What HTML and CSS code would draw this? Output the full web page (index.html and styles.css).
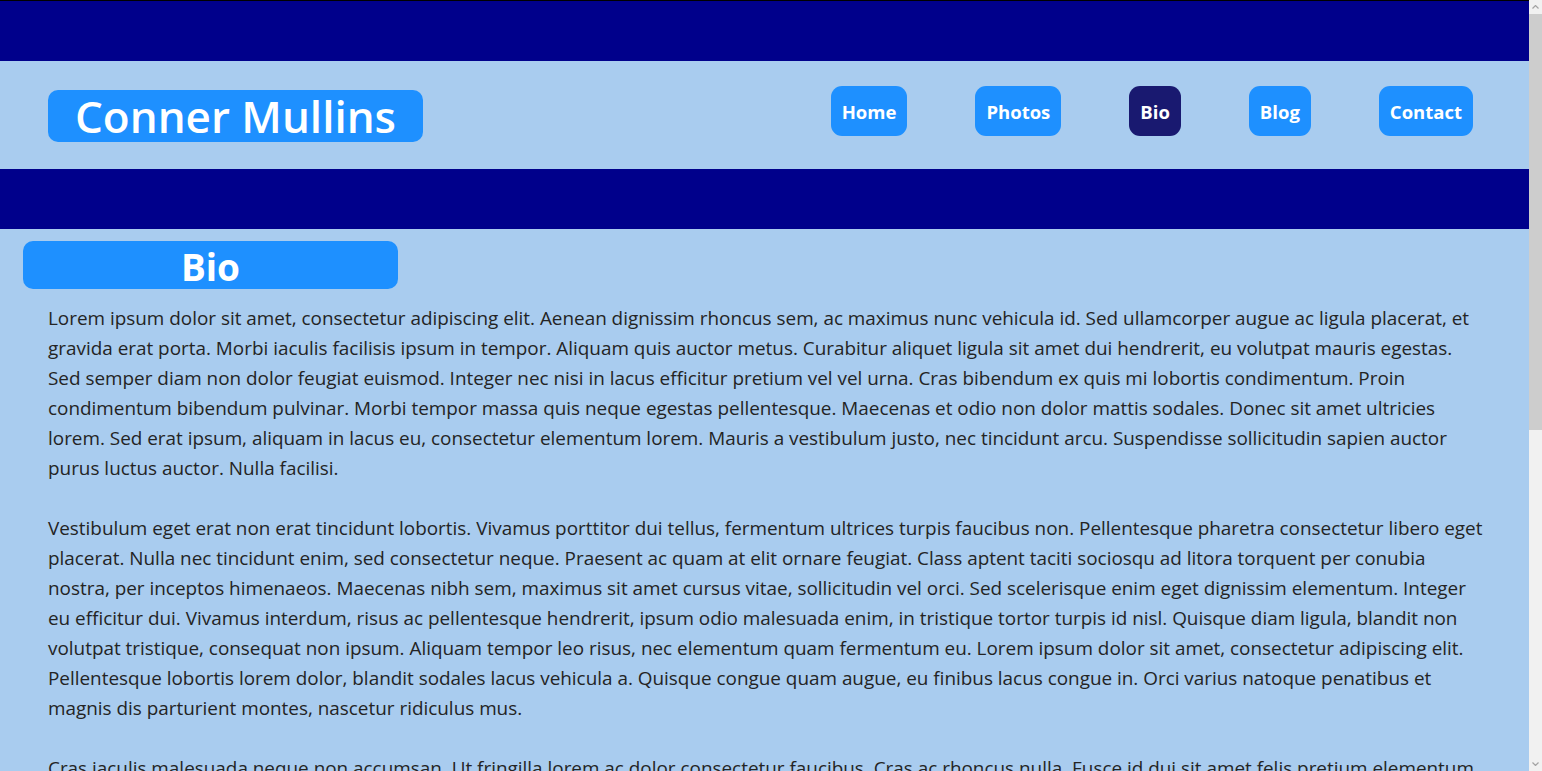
FILE: index.html
```html
<!DOCTYPE html>
<html lang="en">
<head>
<meta charset="utf-8">
<title>Conner Mullins - Bio</title>
<link rel="stylesheet" href="styles.css">
</head>
<body>
<div class="page">
  <header class="site-header">
    <h1 class="brand">Conner Mullins</h1>
    <nav class="main-nav">
      <a class="nav-link" href="#">Home</a>
      <a class="nav-link" href="#">Photos</a>
      <a class="nav-link active" href="#">Bio</a>
      <a class="nav-link" href="#">Blog</a>
      <a class="nav-link" href="#">Contact</a>
    </nav>
  </header>
  <main class="content">
    <h2 class="section-title">Bio</h2>
    <p class="text">Lorem ipsum dolor sit amet, consectetur adipiscing elit. Aenean dignissim rhoncus sem, ac maximus nunc vehicula id. Sed ullamcorper augue ac ligula placerat, et gravida erat porta. Morbi iaculis facilisis ipsum in tempor. Aliquam quis auctor metus. Curabitur aliquet ligula sit amet dui hendrerit, eu volutpat mauris egestas. Sed semper diam non dolor feugiat euismod. Integer nec nisi in lacus efficitur pretium vel vel urna. Cras bibendum ex quis mi lobortis condimentum. Proin condimentum bibendum pulvinar. Morbi tempor massa quis neque egestas pellentesque. Maecenas et odio non dolor mattis sodales. Donec sit amet ultricies lorem. Sed erat ipsum, aliquam in lacus eu, consectetur elementum lorem. Mauris a vestibulum justo, nec tincidunt arcu. Suspendisse sollicitudin sapien auctor purus luctus auctor. Nulla facilisi.</p>
    <p class="text">Vestibulum eget erat non erat tincidunt lobortis. Vivamus porttitor dui tellus, fermentum ultrices turpis faucibus non. Pellentesque pharetra consectetur libero eget placerat. Nulla nec tincidunt enim, sed consectetur neque. Praesent ac quam at elit ornare feugiat. Class aptent taciti sociosqu ad litora torquent per conubia nostra, per inceptos himenaeos. Maecenas nibh sem, maximus sit amet cursus vitae, sollicitudin vel orci. Sed scelerisque enim eget dignissim elementum. Integer eu efficitur dui. Vivamus interdum, risus ac pellentesque hendrerit, ipsum odio malesuada enim, in tristique tortor turpis id nisl. Quisque diam ligula, blandit non volutpat tristique, consequat non ipsum. Aliquam tempor leo risus, nec elementum quam fermentum eu. Lorem ipsum dolor sit amet, consectetur adipiscing elit. Pellentesque lobortis lorem dolor, blandit sodales lacus vehicula a. Quisque congue quam augue, eu finibus lacus congue in. Orci varius natoque penatibus et magnis dis parturient montes, nascetur ridiculus mus.</p>
    <p class="text">Cras iaculis malesuada neque non accumsan. Ut fringilla lorem ac dolor consectetur faucibus. Cras ac rhoncus nulla. Fusce id dui sit amet felis pretium elementum. Nam vel augue in nunc tempus vulputate. Donec porta, sapien eget facilisis tincidunt, nibh massa scelerisque lorem, in aliquam nisl nulla vel risus. Etiam eleifend, justo non posuere convallis, nunc metus ultricies enim, nec sodales ante lacus at neque. Mauris id lectus a mauris aliquam hendrerit. Phasellus semper, nisi vitae feugiat ultrices, est odio dictum augue, sit amet rutrum lorem arcu eget lectus. Nunc venenatis ipsum eu risus sagittis, a vulputate nibh tempor. Integer pulvinar nibh vel mi interdum, quis efficitur est euismod. Praesent vitae lacus non mi tempus fringilla. Duis faucibus, nulla vitae sagittis iaculis, magna urna consequat sem, id bibendum libero mi nec ipsum.</p>
    <p class="text">Aenean vel tortor vitae metus convallis placerat. Suspendisse potenti. Nulla facilisi. Curabitur ac lectus eget sem aliquet dictum sed vitae lorem. Sed ut dui et augue egestas iaculis. In hac habitasse platea dictumst. Proin at blandit justo, id malesuada lacus. Vivamus ac tristique orci. Nunc luctus viverra ex, sed consequat sapien pharetra in. Morbi posuere, nibh at tristique dignissim, mauris mi vulputate nisl, sed convallis nisi odio eu quam. Ut feugiat ante non ligula tincidunt, id finibus erat congue. Maecenas sollicitudin risus in turpis fermentum, ac tincidunt ante elementum. Donec vehicula, metus sit amet faucibus vestibulum, ante mauris pretium metus, eget bibendum quam turpis sit amet sapien.</p>
  </main>
</div>
<div class="scrollbar" aria-hidden="true">
  <span class="sb-btn"><svg width="7" height="4" viewBox="0 0 7 4"><path d="M0.5 3.5 L3.5 0.5 L6.5 3.5" fill="none" stroke="#a3a3a3" stroke-width="1.2"/></svg></span>
  <span class="sb-thumb"></span>
  <span class="sb-space"></span>
  <span class="sb-btn"><svg width="7" height="4" viewBox="0 0 7 4"><path d="M0.5 0.5 L3.5 3.5 L6.5 0.5" fill="none" stroke="#a3a3a3" stroke-width="1.2"/></svg></span>
</div>
</body>
</html>
```
FILE: styles.css
```css
html {
  background: #a9ccef;
}

body {
  margin: 0;
  background: #a9ccef;
  font-family: "Open Sans", "Noto Sans", sans-serif;
  color: #242424;
}

.page {
  margin-right: 13px;
  border-top: 1px solid #000;
}

.scrollbar {
  position: fixed;
  top: 0;
  right: 0;
  display: flex;
  flex-direction: column;
  width: 13px;
  height: 100vh;
  background: #f1f1f1;
}

.sb-btn {
  display: flex;
  align-items: center;
  justify-content: center;
  height: 14px;
  flex: none;
}

.sb-thumb {
  flex: none;
  height: 416px;
  background: #cdcdcd;
}

.sb-space {
  flex: 1;
}

.site-header {
  display: flex;
  align-items: center;
  justify-content: space-between;
  height: 108px;
  padding: 0 56px 0 48px;
  border-top: 60px solid #00008b;
  border-bottom: 60px solid #00008b;
  background: #a9ccef;
}

.brand {
  width: 375px;
  height: 52px;
  margin: 2px 0 0 0;
  border-radius: 10px;
  background: #1e90ff;
  color: #fff;
  font-size: 44px;
  font-weight: 600;
  line-height: 52px;
  text-align: center;
}

.main-nav {
  display: flex;
  gap: 68px;
  margin-bottom: 8px;
}

.nav-link {
  display: flex;
  align-items: center;
  height: 50px;
  padding: 0 11px;
  border-radius: 11px;
  background: #1e90ff;
  color: #fff;
  font-size: 18.5px;
  font-weight: 700;
  text-decoration: none;
}

.nav-link.active {
  background: #191970;
}

.content {
  padding: 12px 0 30px;
}

.section-title {
  width: 375px;
  height: 48px;
  margin: 0 0 14px 23px;
  border-radius: 10px;
  background: #1e90ff;
  color: #fff;
  font-size: 37px;
  font-weight: 700;
  line-height: 51px;
  text-align: center;
}

.text {
  margin: 0 44px 30px 48px;
  font-size: 18.9px;
  line-height: 30px;
}
```
